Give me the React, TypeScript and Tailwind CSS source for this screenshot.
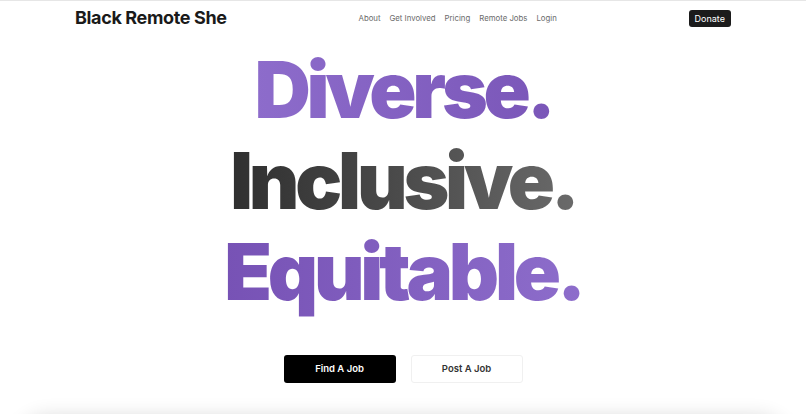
import React from "react";

export default function App() {
  return (
    <div className="min-h-screen bg-white overflow-hidden" style={{ fontFamily: "Inter, 'Noto Sans', sans-serif" }}>
      <div className="border-t border-[#e6e6e6]">
        <header className="flex items-center justify-between px-[75px] h-[34px]">
          <div className="text-[18px] font-bold tracking-[-0.02em] text-[#1a1a1a] leading-none">Black Remote She</div>
          <nav className="flex items-center gap-[9px] text-[7.8px] text-[#6b6b6b] pt-[2px]">
            <a>About</a>
            <a>Get Involved</a>
            <a>Pricing</a>
            <a>Remote Jobs</a>
            <a>Login</a>
          </nav>
          <button className="bg-[#1b1b1b] text-white text-[9px] rounded-[3px] h-[17px] px-[6px] leading-none">Donate</button>
        </header>
        <main className="flex flex-col items-center">
          <h1 className="flex flex-col items-center font-black text-[78px] leading-[91px] tracking-[-0.054em] mt-[9px]">
            <span className="bg-gradient-to-r from-[#8d6ccb] to-[#7a56b8] bg-clip-text text-transparent">Diverse.</span>
            <span className="bg-gradient-to-r from-[#2f2f2f] to-[#6a6a6a] bg-clip-text text-transparent">Inclusive.</span>
            <span className="bg-gradient-to-r from-[#7752b5] to-[#8d6dcb] bg-clip-text text-transparent">Equitable.</span>
          </h1>
          <div className="flex gap-[15px] mt-[38px]">
            <button className="w-[112px] h-[28px] bg-black text-white text-[9.5px] font-semibold rounded-[3px]">Find A Job</button>
            <button className="w-[112px] h-[28px] bg-white text-[#333] text-[9.5px] font-semibold rounded-[3px] border border-[#f0f0f0]">Post A Job</button>
          </div>
        </main>
        <div className="mx-[18px] mt-[40px] h-[60px] rounded-[30px] bg-white shadow-[0_-6px_20px_rgba(0,0,0,0.16)]"></div>
      </div>
    </div>
  );
}
